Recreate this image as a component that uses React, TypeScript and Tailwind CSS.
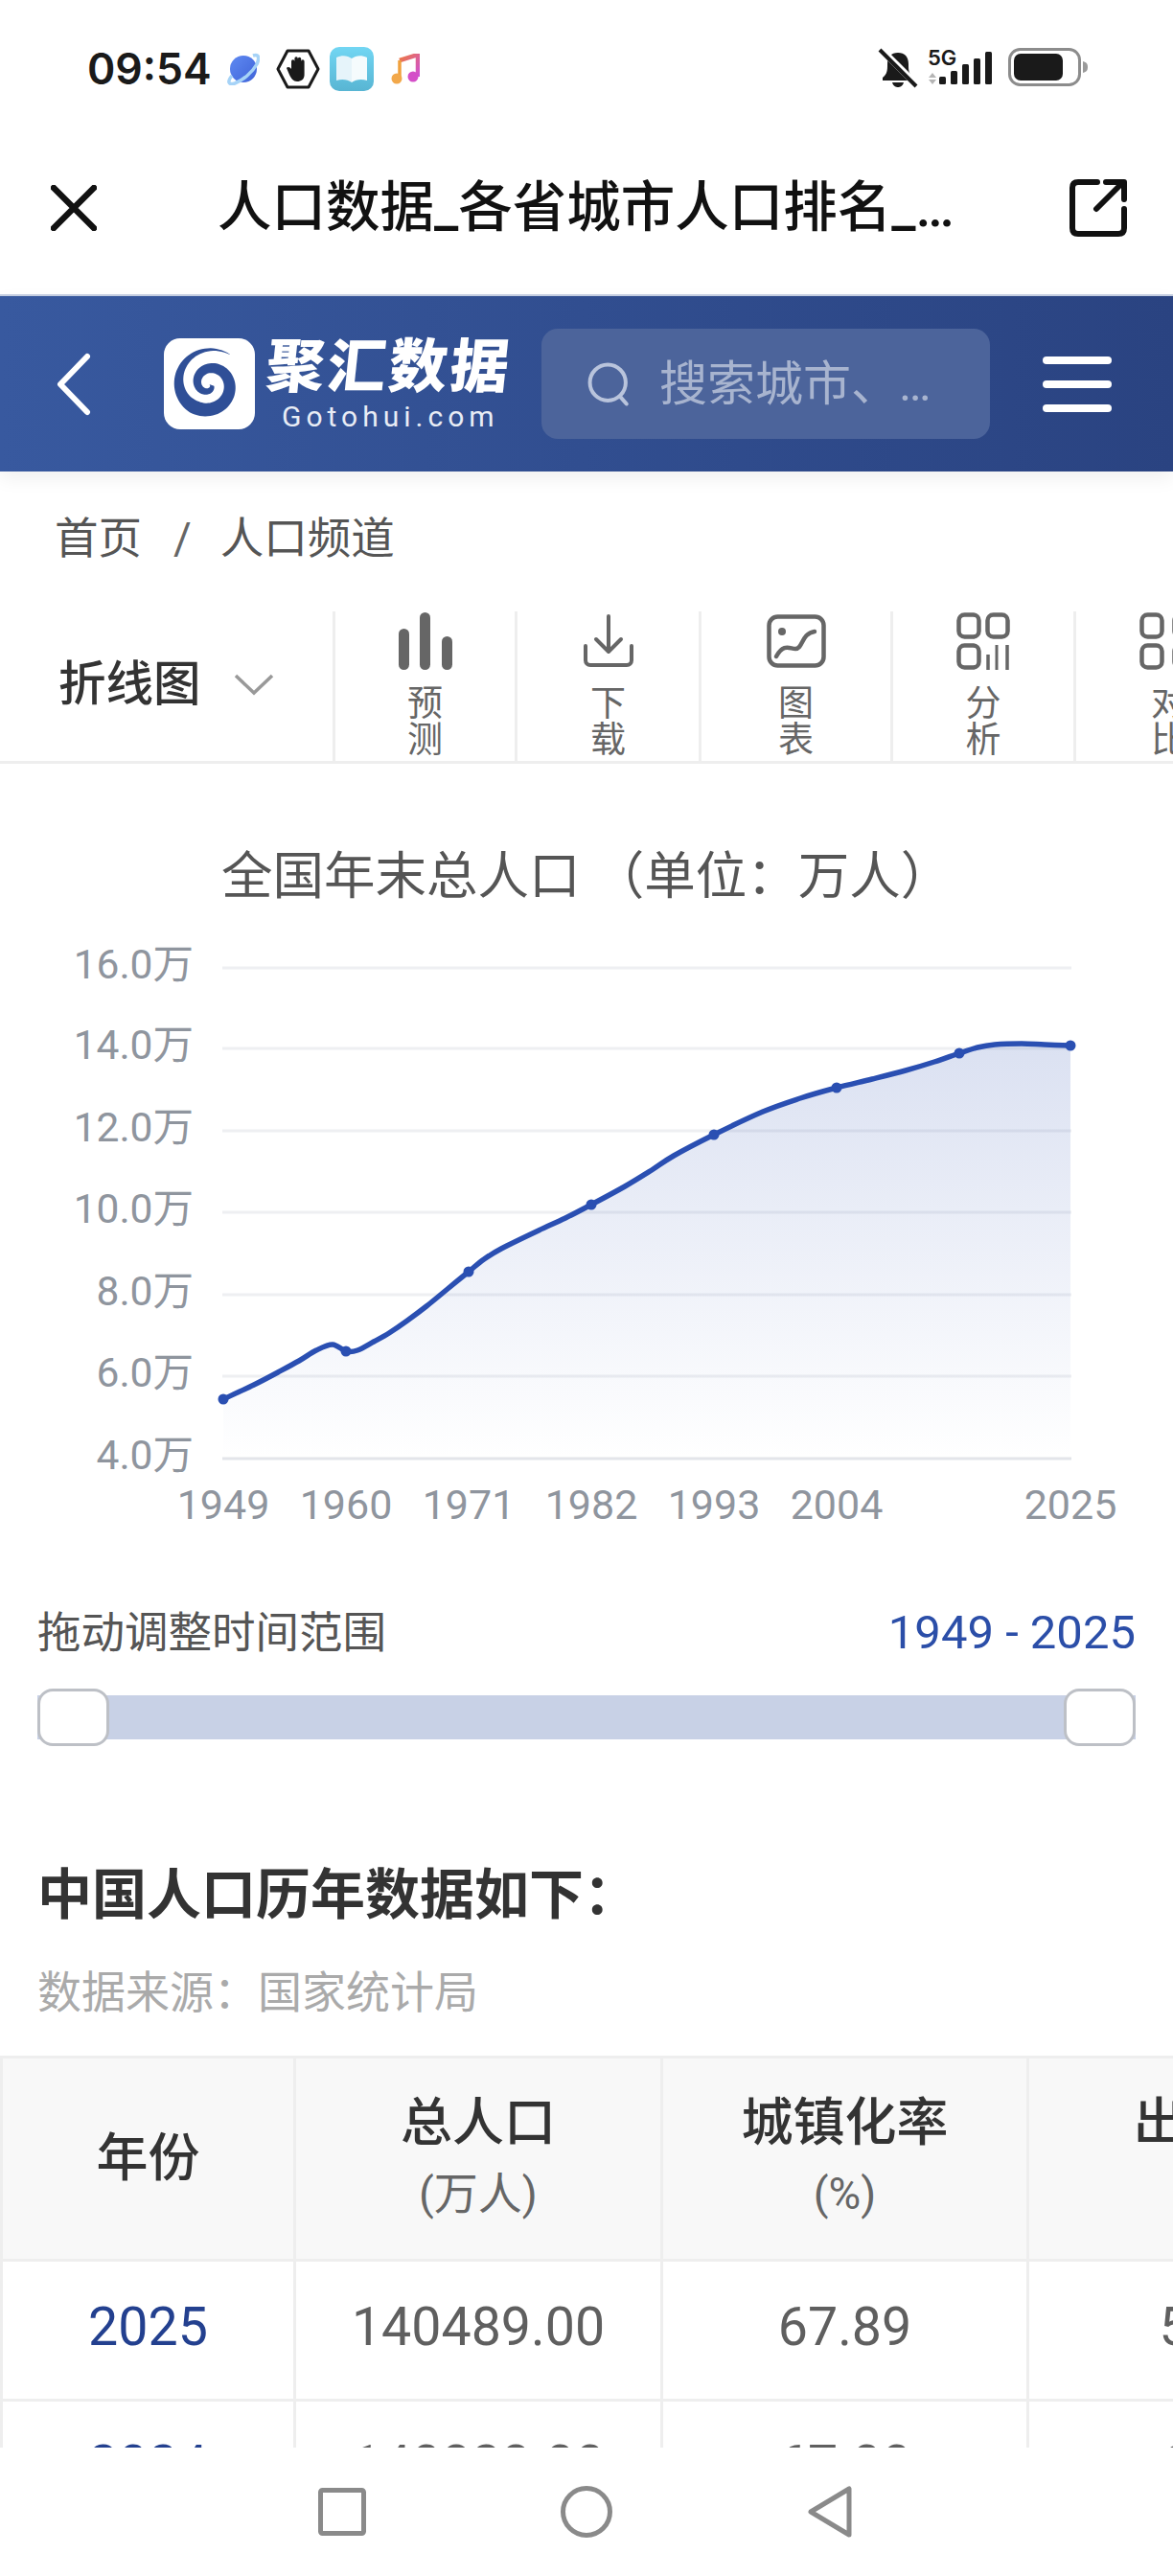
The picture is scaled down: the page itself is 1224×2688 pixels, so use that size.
import React from "react";

const pts: [number, number][] = [
  [233, 1460], [265, 1445], [290, 1432], [312, 1420], [330, 1409], [347, 1403], [361, 1410], [373, 1409],
  [390, 1400], [406, 1391], [425, 1378], [445, 1363], [467, 1345], [489, 1327], [505, 1314], [523, 1303], [562, 1284],
  [590, 1271], [617, 1257], [652, 1238], [680, 1221], [703, 1206], [745, 1184], [796, 1160], [835, 1146], [873, 1135],
  [910, 1126], [945, 1117], [975, 1108], [1001, 1099], [1020, 1093], [1038, 1090], [1066, 1089], [1090, 1090], [1117, 1091],
];

function smooth(p: [number, number][]) {
  let d = `M${p[0][0]} ${p[0][1]}`;
  for (let i = 0; i < p.length - 1; i++) {
    const a = p[Math.max(0, i - 1)], b = p[i], c = p[i + 1], e = p[Math.min(p.length - 1, i + 2)];
    d += ` C${(b[0] + (c[0] - a[0]) / 6).toFixed(1)} ${(b[1] + (c[1] - a[1]) / 6).toFixed(1)} ${(c[0] - (e[0] - b[0]) / 6).toFixed(1)} ${(c[1] - (e[1] - b[1]) / 6).toFixed(1)} ${c[0]} ${c[1]}`;
  }
  return d;
}
const linePath = smooth(pts);
const areaPath = `${linePath} L1117 1522 L233 1522 Z`;

function spiralPath() {
  const outer: string[] = [];
  const inner: string[] = [];
  const N = 140;
  const end = (-55 * Math.PI) / 180;
  const turns = 1.8;
  for (let i = 0; i <= N; i++) {
    const t = i / N;
    const th = end - (1 - t) * turns * 2 * Math.PI;
    const r = 3 + 35 * t;
    const w = t > 0.72 ? 7 * (1 - t) / 0.28 + 0.2 : 2.6 + 4.6 * (t / 0.72);
    outer.push(`${(47 + (r + w) * Math.cos(th)).toFixed(2)} ${(48 + (r + w) * Math.sin(th)).toFixed(2)}`);
    inner.unshift(`${(47 + (r - w) * Math.cos(th)).toFixed(2)} ${(48 + (r - w) * Math.sin(th)).toFixed(2)}`);
  }
  return "M" + outer.concat(inner).join(" L") + " Z";
}
const spiral = spiralPath();

const yLabels = ["16.0万", "14.0万", "12.0万", "10.0万", "8.0万", "6.0万", "4.0万"];
const gridY = [1010, 1094, 1180, 1265, 1351, 1436, 1522];
const xLabels: [string, number][] = [["1949", 233], ["1960", 361], ["1971", 489], ["1982", 617], ["1993", 745], ["2004", 873], ["2025", 1117]];
const dots: [number, number][] = [[233, 1460], [361, 1410], [489, 1327], [617, 1257], [745, 1184], [873, 1135], [1001, 1099], [1117, 1091]];

function StatusBar() {
  return (
    <div className="h-[143px] shrink-0 flex items-start pt-[50px] pl-[91px] pr-[88px] justify-between">
      <div className="flex items-center h-[44px]">
        <span className="font-['Inter'] text-[44.5px] font-semibold leading-[44px] text-[#1a1a1a] w-[147px]">09:54</span>
        <svg width="34" height="34" viewBox="0 0 34 34" className="-ml-[1px]">
          <defs><linearGradient id="pl" x1="0" y1="0" x2="1" y2="1"><stop offset="0" stopColor="#5f8af2" /><stop offset="1" stopColor="#3f63d8" /></linearGradient></defs>
          <circle cx="17" cy="17" r="14" fill="url(#pl)" />
          <path d="M5 24 C0 30 1 34 8 32 C16 29 26 21 31 12 C34 5 33 1 27 3" fill="none" stroke="#a6d3f7" strokeWidth="3.5" />
        </svg>
        <svg width="46" height="42" viewBox="0 0 46 42" className="ml-[17px]">
          <path d="M12 2 H34 L44 21 L34 40 H12 L2 21 Z" fill="#fff" stroke="#1a1a1a" strokeWidth="3" strokeLinejoin="round" />
          <path d="M11 20 C12 18 15 19 16 21 V13 a1.7 1.7 0 0 1 3.4 0 V10 a1.7 1.7 0 0 1 3.4 0 V10.5 a1.7 1.7 0 0 1 3.4 0 V13 a1.7 1.7 0 0 1 3.4 0 V26 C30 32 26 34 22 34 C18 34 16 31 14 27 Z" fill="#1a1a1a" />
        </svg>
        <svg width="46" height="46" viewBox="0 0 46 46" className="ml-[10px]">
          <defs><linearGradient id="bk" x1="0" y1="0" x2="0" y2="1"><stop offset="0" stopColor="#72d6f3" /><stop offset="1" stopColor="#58b5d3" /></linearGradient></defs>
          <rect width="46" height="46" rx="10" fill="url(#bk)" />
          <path d="M7 11 C13 8 19 9 23 12 V37 C19 34 13 33 7 35 Z" fill="#e6f4fa" />
          <path d="M39 11 C33 8 27 9 23 12 V37 C27 34 33 33 39 35 Z" fill="#f5fbfd" />
        </svg>
        <svg width="30" height="32" viewBox="0 0 30 32" className="ml-[18px]">
          <defs><linearGradient id="mu" x1="0" y1="0" x2="1" y2="1"><stop offset="0" stopColor="#ee7a3c" /><stop offset="1" stopColor="#cf4fd6" /></linearGradient></defs>
          <path d="M9 7 L28 1 V24" fill="none" stroke="url(#mu)" strokeWidth="4.5" />
          <path d="M9 7 V26" stroke="#f0a13d" strokeWidth="3.5" />
          <circle cx="6" cy="26" r="5.5" fill="#f2a84a" />
          <circle cx="23" cy="24" r="5.5" fill="#d44fc8" />
        </svg>
      </div>
      <div className="flex items-start">
        <svg width="44" height="44" viewBox="0 0 44 44" className="mt-[-1px]">
          <path d="M6 32 C11 28 11 24 11 18 C11 10 15 6 22 6 C29 6 33 10 33 18 C33 24 33 28 38 32 V35 H6 Z" fill="#1a1a1a" />
          <path d="M16 37 H28 C27 41 24 42 22 42 C20 42 17 41 16 37 Z" fill="#1a1a1a" />
          <path d="M4 2 L42 40" stroke="#fff" strokeWidth="7" />
          <path d="M3 3 L41 41" stroke="#1a1a1a" strokeWidth="4" />
        </svg>
        <div className="relative w-[68px] h-[40px] ml-[9px]">
          <span className="absolute left-0 -top-[1px] font-['Inter'] text-[22px] font-semibold leading-[22px] text-[#1a1a1a]">5G</span>
          <svg width="68" height="40" viewBox="0 0 68 40" className="absolute left-0 top-0">
            <path d="M1 31 L5 26 L9 31 Z M1 33 H9 L5 38 Z" fill="#b5b5b5" />
            <rect x="12" y="30" width="7" height="8" rx="1.5" fill="#1a1a1a" />
            <rect x="24" y="24" width="7" height="14" rx="1.5" fill="#1a1a1a" />
            <rect x="36" y="17" width="7" height="21" rx="1.5" fill="#1a1a1a" />
            <rect x="48" y="11" width="7" height="27" rx="1.5" fill="#1a1a1a" />
            <rect x="60" y="4" width="7" height="34" rx="1.5" fill="#1a1a1a" />
          </svg>
        </div>
        <svg width="84" height="40" viewBox="0 0 84 40" className="ml-[16px]">
          <rect x="1.5" y="1.5" width="73" height="37" rx="11" fill="#fff" stroke="#8c8c8c" strokeWidth="3" />
          <rect x="6" y="6" width="51" height="28" rx="7" fill="#1a1a1a" />
          <path d="M78 14 C82 15 83 17 83 20 C83 23 82 25 78 26 Z" fill="#9a9a9a" />
        </svg>
      </div>
    </div>
  );
}

function TitleBar() {
  return (
    <div className="h-[164px] shrink-0 flex items-center pl-[53px] pr-[48px] pb-[16px]">
      <svg width="48" height="48" viewBox="0 0 48 48"><path d="M3 3 L45 45 M45 3 L3 45" stroke="#111" strokeWidth="6.5" strokeLinecap="round" /></svg>
      <div className="ml-[126px] w-[820px] text-[56.5px] font-medium leading-[70px] text-[#111] whitespace-nowrap">人口数据_各省城市人口排名_…</div>
      <svg width="60" height="60" viewBox="0 0 60 60" className="ml-auto" fill="none" stroke="#111" strokeWidth="6" strokeLinecap="round" strokeLinejoin="round">
        <path d="M29 3 H9 C5 3 3 5 3 9 V51 C3 55 5 57 9 57 H51 C55 57 57 55 57 51 V31" />
        <path d="M28 31 L56 3 M38 3 H57 V21" />
      </svg>
    </div>
  );
}

function Header() {
  return (
    <div className="h-[185px] shrink-0 flex items-center bg-gradient-to-r from-[#38599f] to-[#2a4381] border-t-[2px] border-[#c4cde0] shadow-[0_8px_18px_rgba(0,0,0,0.06)] relative z-10">
      <svg width="36" height="66" viewBox="0 0 36 66" className="ml-[59px]" fill="none" stroke="#fff" strokeWidth="6" strokeLinecap="round" strokeLinejoin="round"><path d="M32 4 L4 33 L32 62" /></svg>
      <div className="ml-[76px] w-[95px] h-[95px] rounded-[17px] bg-white shrink-0">
        <svg width="95" height="95" viewBox="0 0 95 95"><path d={spiral} fill="#2f4f97" /></svg>
      </div>
      <div className="ml-[12px] w-[270px] shrink-0 flex flex-col items-start">
        <span className="text-[61px] leading-[62px] font-black text-white -skew-x-6 whitespace-nowrap tracking-[3px]">聚汇数据</span>
        <span className="font-['Roboto'] text-[30px] leading-[30px] mt-[6px] ml-[16px] tracking-[5px] text-[#e8ecf5] whitespace-nowrap">Gotohui.com</span>
      </div>
      <div className="ml-[17px] w-[468px] h-[115px] rounded-[17px] bg-[#4c649b] flex items-center shrink-0">
        <svg width="48" height="48" viewBox="0 0 54 54" className="ml-[47px]" fill="none" stroke="#b9c4dc" strokeWidth="4.5" strokeLinecap="round"><circle cx="25" cy="25" r="21" /><path d="M40 42 L47 50" /></svg>
        <span className="ml-[28px] text-[50px] leading-[60px] text-[#a8b4cf] whitespace-nowrap">搜索城市、…</span>
      </div>
      <div className="ml-[55px] w-[72px] flex flex-col gap-[17px]">
        <div className="h-[8px] rounded-full bg-white" />
        <div className="h-[8px] rounded-full bg-white" />
        <div className="h-[8px] rounded-full bg-white" />
      </div>
    </div>
  );
}

function Breadcrumb() {
  return (
    <div className="h-[140px] shrink-0 flex items-center pl-[57px] text-[45.5px] text-[#555] pt-[2px]">
      <span>首页</span>
      <span className="ml-[33px] text-[#666]">/</span>
      <span className="ml-[30px]">人口频道</span>
    </div>
  );
}

function ToolItem({ w, label, children }: { w: string; label: string; children: React.ReactNode }) {
  return (
    <div className={`${w} shrink-0 h-[157px] mt-[6px] border-l-[3px] border-[#eeeeee] flex flex-col items-center`}>
      <div className="h-[65px] pt-[1px] flex items-start justify-center">{children}</div>
      <div className="w-[38px] text-[37px] leading-[37.5px] text-[#666] text-center mt-[13px]">{label}</div>
    </div>
  );
}

function Toolbar() {
  return (
    <div className="h-[165px] shrink-0 flex items-start border-b-[3px] border-[#eeeeee] overflow-hidden">
      <div className="w-[347px] shrink-0 h-[160px] flex items-center pl-[61px] pb-[2px] pt-[6px]">
        <span className="text-[49.5px] font-medium text-[#333] leading-[60px]">折线图</span>
        <svg width="42" height="24" viewBox="0 0 42 24" className="ml-[34px]" fill="none" stroke="#999" strokeWidth="3.5"><path d="M2 3 L21 21 L40 3" /></svg>
      </div>
      <ToolItem w="w-[190px]" label="预测">
        <svg width="56" height="60" viewBox="0 0 56 60" fill="#666"><rect x="0" y="17" width="11" height="43" rx="5.5" /><rect x="22" y="0" width="11" height="60" rx="5.5" /><rect x="45" y="25" width="11" height="35" rx="5.5" /></svg>
      </ToolItem>
      <ToolItem w="w-[192px]" label="下载">
        <svg width="52" height="56" viewBox="0 0 52 56" fill="none" stroke="#666" strokeWidth="4" strokeLinecap="round" strokeLinejoin="round" className="mt-[2px]"><path d="M26 2 V38 M13 26 L26 39 L39 26" /><path d="M2 33 V48 C2 51 4 53 7 53 H45 C48 53 50 51 50 48 V33" /></svg>
      </ToolItem>
      <ToolItem w="w-[200px]" label="图表">
        <svg width="62" height="56" viewBox="0 0 62 56" fill="none" stroke="#666" strokeWidth="4.5" strokeLinecap="round" className="mt-[2px]"><rect x="2.5" y="2.5" width="57" height="51" rx="9" /><circle cx="16" cy="18" r="4" fill="#666" stroke="none" /><path d="M10 44 C18 30 24 36 30 36 C38 36 36 20 50 18" /></svg>
      </ToolItem>
      <ToolItem w="w-[191px]" label="分析">
        <svg width="56" height="60" viewBox="0 0 56 60" fill="none" stroke="#666" strokeWidth="4.5"><rect x="2.5" y="2.5" width="21" height="23" rx="6" /><rect x="32.5" y="2.5" width="21" height="23" rx="6" /><rect x="2.5" y="34.5" width="21" height="23" rx="6" /><path d="M33 44 V60" strokeWidth="3.5" /><path d="M42 34 V60" strokeWidth="3" /><path d="M53 34 V60" strokeWidth="3.5" /></svg>
      </ToolItem>
      <ToolItem w="w-[196px]" label="对比">
        <svg width="62" height="60" viewBox="0 0 62 60" fill="none" stroke="#666" strokeWidth="4.5"><rect x="2.5" y="2.5" width="21" height="23" rx="6" /><rect x="2.5" y="34.5" width="21" height="23" rx="6" /><rect x="36.5" y="2.5" width="21" height="23" rx="6" /><rect x="36.5" y="34.5" width="21" height="23" rx="6" /></svg>
      </ToolItem>
    </div>
  );
}

function Chart() {
  return (
    <div>
      <div className="pt-[88px] pl-[231px] text-[53.5px] leading-[60px] text-[#555] whitespace-nowrap">全国年末总人口 （单位：万人）</div>
      <svg width="1224" height="620" viewBox="0 980 1224 620" className="block mt-[35px]">
        <defs>
          <linearGradient id="area" gradientUnits="userSpaceOnUse" x1="0" y1="1089" x2="0" y2="1522">
            <stop offset="0" stopColor="#2a4eb0" stopOpacity="0.17" />
            <stop offset="1" stopColor="#2a4eb0" stopOpacity="0" />
          </linearGradient>
        </defs>
        {gridY.map((y, i) => (
          <line key={y} x1="232" x2="1118" y1={y} y2={y} stroke={i === 6 ? "#e3e5ea" : "#eeeff2"} strokeWidth="3" />
        ))}
        {yLabels.map((t, i) => (
          <text key={t} x="202" y={gridY[i] + 11} textAnchor="end" fontSize="42.5" fill="#8f959e">{t}</text>
        ))}
        <path d={areaPath} fill="url(#area)" />
        <path d={linePath} fill="none" stroke="#2a4fb2" strokeWidth="5.5" strokeLinejoin="round" />
        {dots.map(([x, y]) => <circle key={x} cx={x} cy={y} r="5.5" fill="#2a4fb2" />)}
        {xLabels.map(([t, x]) => (
          <text key={t} x={x} y="1585" textAnchor="middle" fontSize="43" fill="#8f959e">{t}</text>
        ))}
      </svg>
    </div>
  );
}

function Slider() {
  return (
    <div className="px-[39px] pt-[75px]">
      <div className="flex justify-between h-[60px] items-center">
        <span className="text-[45.5px] leading-[60px] text-[#555]">拖动调整时间范围</span>
        <span className="text-[49px] leading-[60px] pb-[3px] text-[#2b4ea8]">1949 - 2025</span>
      </div>
      <div className="relative h-[60px] mt-[27px] flex items-center">
        <div className="w-full h-[46px] bg-[#c8d1e6]" />
        <div className="absolute left-0 top-0 w-[75px] h-[60px] rounded-[16px] bg-white border-[3px] border-[#bdc0c6]" />
        <div className="absolute right-0 top-0 w-[75px] h-[60px] rounded-[16px] bg-white border-[3px] border-[#bdc0c6]" />
      </div>
    </div>
  );
}

const thCls = "border-[3px] border-[#eeeeee] align-middle text-center font-medium";
const tdCls = "border-[3px] border-[#eeeeee] text-center font-['Roboto'] text-[55.5px] text-[#5f5f5f] font-normal pb-[6px]";

function DataTable() {
  return (
    <table className="table-fixed border-collapse w-[1453px] mt-[36px]">
      <thead>
        <tr className="h-[212px] bg-[#f8f8f8]">
          <th className={`${thCls} w-[306px] text-[54px] text-[#333]`}>年份</th>
          {[["总人口", "(万人)", "w-[383px]"], ["城镇化率", "(%)", "w-[382px]"], ["出生率", "(‰)", "w-[382px]"]].map(([a, b, w]) => (
            <th key={a} className={`${thCls} ${w} pb-[6px]`}>
              <div className="text-[54px] leading-[70px] text-[#333]">{a}</div>
              <div className="text-[46px] leading-[60px] mt-[8px] text-[#666] font-normal">{b}</div>
            </th>
          ))}
        </tr>
      </thead>
      <tbody>
        {[["2025", "140489.00", "67.89", "5.63", "h-[146px]"], ["2024", "140828.00", "67.00", "6.77", "h-[142px]"]].map((r) => (
          <tr key={r[0]} className={r[4]}>
            <td className={`${tdCls} !text-[#23408f]`}>{r[0]}</td>
            <td className={tdCls}>{r[1]}</td>
            <td className={tdCls}>{r[2]}</td>
            <td className={tdCls}>{r[3]}</td>
          </tr>
        ))}
      </tbody>
    </table>
  );
}

function BottomNav() {
  return (
    <div className="h-[134px] shrink-0 bg-white flex items-start justify-center pt-[40px] relative">
      <div className="flex items-center -ml-[4px]">
        <svg width="50" height="50" viewBox="0 0 50 50" fill="none" stroke="#8a8a8a" strokeWidth="5"><rect x="2.5" y="2.5" width="45" height="45" rx="2" /></svg>
        <svg width="54" height="54" viewBox="0 0 54 54" fill="none" stroke="#8a8a8a" strokeWidth="5" className="ml-[203px]"><circle cx="27" cy="27" r="24.5" /></svg>
        <svg width="46" height="54" viewBox="0 0 46 54" fill="none" stroke="#8a8a8a" strokeWidth="5" strokeLinejoin="round" className="ml-[204px]"><path d="M43 3 V51 L3 27 Z" /></svg>
      </div>
    </div>
  );
}

export default function App() {
  return (
    <div className="w-[1224px] h-[2688px] bg-white flex flex-col overflow-hidden font-['Roboto','Noto_Sans_CJK_SC',sans-serif]">
      <StatusBar />
      <TitleBar />
      <Header />
      <div className="flex-1 min-h-0 overflow-hidden">
        <Breadcrumb />
        <Toolbar />
        <Chart />
        <Slider />
        <div className="pl-[39px] mt-[121px] text-[57px] leading-[70px] font-bold text-[#333]">中国人口历年数据如下：</div>
        <div className="pl-[39px] mt-[36px] text-[46px] leading-[60px] text-[#aaaaaa]">数据来源：国家统计局</div>
        <DataTable />
      </div>
      <BottomNav />
    </div>
  );
}
